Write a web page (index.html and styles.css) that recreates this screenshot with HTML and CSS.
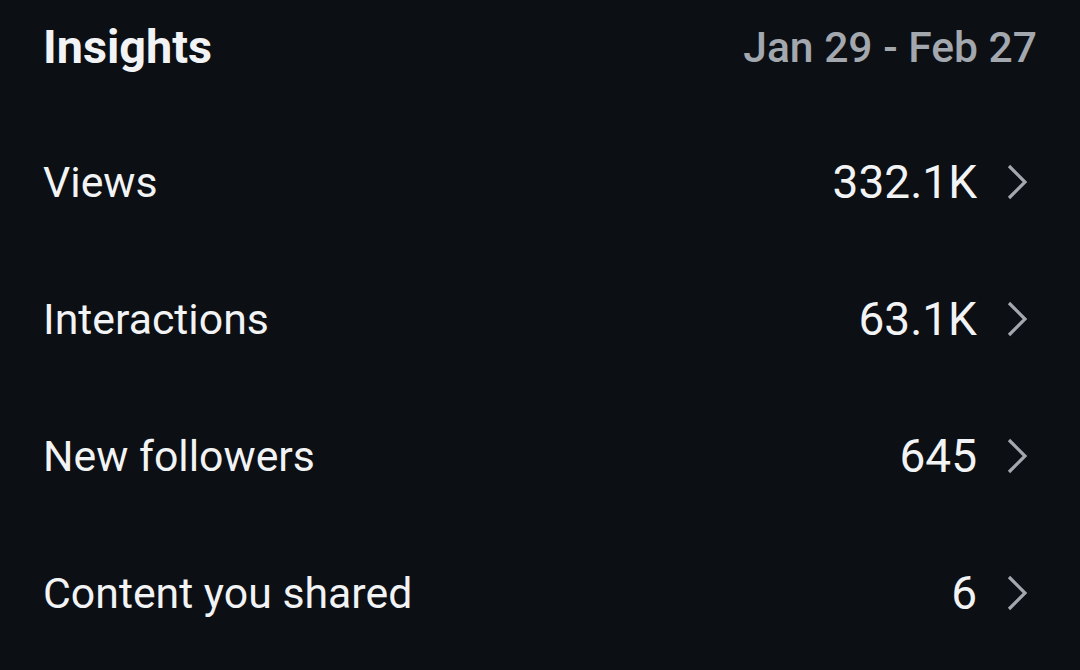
FILE: index.html
```html
<!DOCTYPE html>
<html>
<head>
<meta charset="utf-8">
<link rel="stylesheet" href="styles.css">
</head>
<body>
<div class="panel">
  <div class="header">
    <div class="title">Insights</div>
    <div class="range">Jan 29 - Feb 27</div>
  </div>
  <div class="row">
    <div class="label">Views</div>
    <div class="value">332.1K</div>
    <svg class="chev" viewBox="0 0 24 36" width="24" height="36"><path d="M5 2 L21 18 L5 34" /></svg>
  </div>
  <div class="row">
    <div class="label">Interactions</div>
    <div class="value">63.1K</div>
    <svg class="chev" viewBox="0 0 24 36" width="24" height="36"><path d="M5 2 L21 18 L5 34" /></svg>
  </div>
  <div class="row">
    <div class="label">New followers</div>
    <div class="value">645</div>
    <svg class="chev" viewBox="0 0 24 36" width="24" height="36"><path d="M5 2 L21 18 L5 34" /></svg>
  </div>
  <div class="row">
    <div class="label">Content you shared</div>
    <div class="value">6</div>
    <svg class="chev" viewBox="0 0 24 36" width="24" height="36"><path d="M5 2 L21 18 L5 34" /></svg>
  </div>
</div>
</body>
</html>
```
FILE: styles.css
```css
html, body {
  margin: 0;
  padding: 0;
  background: #0c0f14;
}
body {
  font-family: Roboto, "Liberation Sans", sans-serif;
  color: #f2f3f5;
  width: 1080px;
  height: 670px;
  overflow: hidden;
}
.panel {
  padding: 0 43px;
}
.header {
  display: flex;
  justify-content: space-between;
  align-items: center;
  height: 94px;
  margin-bottom: 19px;
}
.title {
  font-size: 46.8px;
  font-weight: 700;
}
.range {
  font-size: 42.6px;
  font-weight: 500;
  color: #a3a7ae;
}
.row {
  display: flex;
  align-items: center;
  height: 137px;
}
.label {
  flex: 1;
  font-size: 42.8px;
}
.value {
  font-size: 46px;
}
.chev {
  margin-left: 27px;
  margin-right: 9px;
  fill: none;
  stroke: #a3a7ae;
  stroke-width: 3.2;
}
```
